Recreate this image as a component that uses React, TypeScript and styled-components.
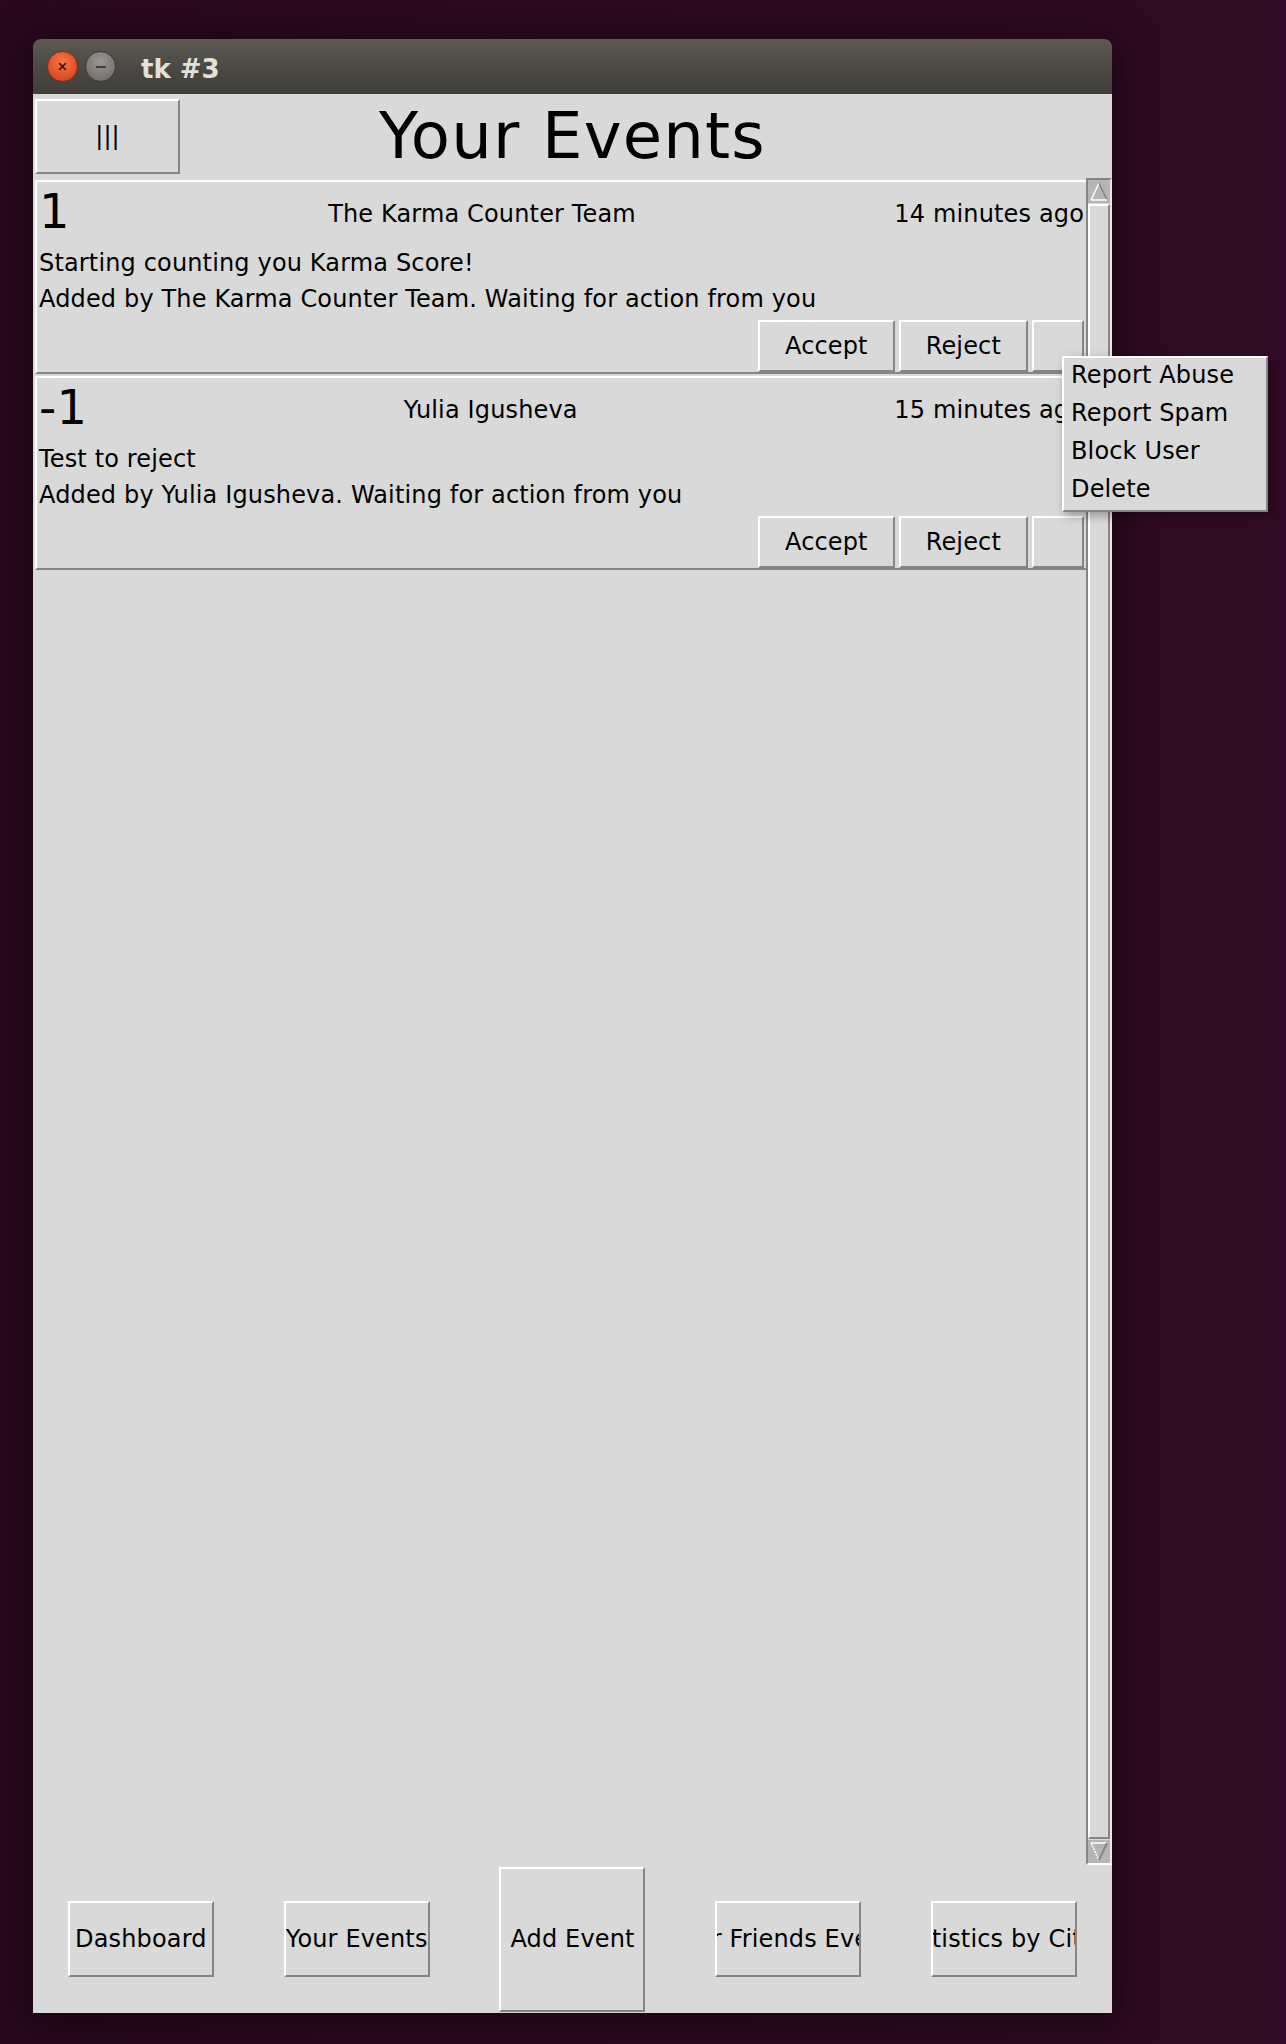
import React from "react";
import styled, { createGlobalStyle, css } from "styled-components";

const GlobalStyle = createGlobalStyle`
  html, body { margin: 0; padding: 0; }
  body {
    background: #2e0a23;
    width: 1286px;
    height: 2044px;
    overflow: hidden;
    font-family: "DejaVu Sans", "Liberation Sans", sans-serif;
    letter-spacing: 0.15px;
  }
`;

const raised = css`
  border-style: solid;
  border-width: 2px;
  border-color: #ffffff #858585 #858585 #ffffff;
`;

const Desktop = styled.div`
  width: 1286px;
  height: 2044px;
  box-sizing: border-box;
  padding: 39px 0 0 33px;
  background: linear-gradient(90deg, #2a0820 0%, #2e0a23 40%, #310b25 100%);
`;

const Window = styled.div`
  position: relative;
  width: 1079px;
  display: flex;
  flex-direction: column;
  border-radius: 8px 8px 0 0;
  box-shadow: 0 6px 40px 10px rgba(0, 0, 0, 0.45);
`;

const TitleBar = styled.div`
  height: 55px;
  display: flex;
  align-items: center;
  gap: 7px;
  padding-left: 14px;
  border-radius: 8px 8px 0 0;
  background: linear-gradient(180deg, #5c5a53 0%, #4a4843 55%, #403f3a 100%);
`;

const WinButton = styled.div<{ $kind: "close" | "min" }>`
  width: 31px;
  height: 31px;
  border-radius: 50%;
  box-sizing: border-box;
  display: flex;
  align-items: center;
  justify-content: center;
  border: 1px solid ${(p) => (p.$kind === "close" ? "#8a2c12" : "#3a3935")};
  background: ${(p) =>
    p.$kind === "close"
      ? "radial-gradient(circle at 50% 35%, #f47a4c 0%, #e5532a 55%, #c8431d 100%)"
      : "radial-gradient(circle at 50% 35%, #9a9893 0%, #7e7c77 55%, #6a6864 100%)"};
`;

const WinTitle = styled.div`
  margin-left: 18px;
  padding-top: 4px;
  font-family: "DejaVu Sans", sans-serif;
  font-weight: bold;
  font-size: 26px;
  letter-spacing: 0;
  color: #e4e0d7;
`;

const Body = styled.div`
  height: 1919px;
  background: #d9d9d9;
  display: flex;
  flex-direction: column;
`;

const Header = styled.div`
  height: 84px;
  display: grid;
  grid-template-columns: 1fr auto 1fr;
  align-items: center;
`;

const MenuButton = styled.div`
  justify-self: start;
  margin-left: 2px;
  width: 145px;
  height: 75px;
  box-sizing: border-box;
  ${raised};
  display: flex;
  align-items: center;
  justify-content: center;
  font-size: 24px;
  color: #000;
`;

const Heading = styled.h1`
  margin: 0;
  font-weight: normal;
  font-size: 64px;
  letter-spacing: 1.2px;
  color: #000;
  font-family: "DejaVu Sans", sans-serif;
`;

const Main = styled.div`
  height: 1687px;
  display: flex;
`;

const List = styled.div`
  flex: 1;
  padding: 2px 0 0 2px;
  display: flex;
  flex-direction: column;
  gap: 2px;
`;

const Card = styled.div`
  border-style: solid;
  border-width: 2px 0 2px 2px;
  border-color: #ffffff #858585 #858585 #ffffff;
  padding: 1px 2px 0 2px;
  color: #000;
`;

const TopRow = styled.div`
  height: 62px;
  display: flex;
  align-items: center;
`;

const Score = styled.div`
  align-self: flex-start;
  font-size: 48px;
  line-height: 56px;
`;

const Author = styled.div`
  flex: 1;
  text-align: center;
  font-size: 24px;
  line-height: 28px;
`;

const Time = styled.div`
  font-size: 24px;
  line-height: 28px;
  white-space: nowrap;
`;

const TextLine = styled.div`
  font-size: 24px;
  line-height: 36px;
  white-space: nowrap;
`;

const Actions = styled.div`
  margin-top: 3px;
  display: flex;
  justify-content: flex-end;
  gap: 4px;
`;

const ActionButton = styled.div<{ $square?: boolean }>`
  height: 52px;
  width: ${(p) => (p.$square ? "52px" : "auto")};
  padding: ${(p) => (p.$square ? "0" : "0 25px")};
  box-sizing: border-box;
  ${raised};
  display: flex;
  align-items: center;
  justify-content: center;
  font-size: 24px;
`;

const Scrollbar = styled.div`
  width: 26px;
  box-sizing: border-box;
  border-style: solid;
  border-width: 2px;
  border-color: #858585 #e8e8e8 #ffffff #858585;
  display: flex;
  flex-direction: column;
`;

const ArrowBox = styled.div`
  height: 23px;
  background: #b5b5b5;
  display: flex;
  align-items: center;
  justify-content: center;
`;

const Slider = styled.div`
  flex: 1;
  margin: 1px 0;
  ${raised};
  background: #d9d9d9;
`;

const BottomBar = styled.div`
  height: 148px;
  display: grid;
  grid-template-columns: repeat(5, 1fr);
  align-items: center;
  justify-items: center;
`;

const NavButton = styled.div<{ $tall?: boolean }>`
  width: 146px;
  height: ${(p) => (p.$tall ? "145px" : "76px")};
  box-sizing: border-box;
  ${raised};
  display: flex;
  align-items: center;
  justify-content: center;
  overflow: hidden;
  white-space: nowrap;
  font-size: 24px;
  color: #000;
`;

const Popup = styled.div`
  position: absolute;
  left: 1029px;
  top: 317px;
  width: 206px;
  box-sizing: border-box;
  ${raised};
  background: #d9d9d9;
  box-shadow: 3px 4px 10px rgba(0, 0, 0, 0.3);
`;

const PopupItem = styled.div`
  height: 38px;
  box-sizing: border-box;
  padding: 0 0 4px 7px;
  line-height: 34px;
  font-size: 24px;
  color: #000;
  white-space: nowrap;
`;

const events = [
  {
    score: "1",
    author: "The Karma Counter Team",
    time: "14 minutes ago",
    text: "Starting counting you Karma Score!",
  },
  {
    score: "-1",
    author: "Yulia Igusheva",
    time: "15 minutes ago",
    text: "Test to reject",
  },
];

const navItems = [
  "Dashboard",
  "Your Events",
  "Add Event",
  "Your Friends Events",
  "Statistics by Cities",
];

const UpArrow = () => (
  <svg width="22" height="23" viewBox="0 0 22 23">
    <polygon points="11,3 3,20 19,20" fill="#b5b5b5" />
    <line x1="11" y1="3" x2="3" y2="20" stroke="#ffffff" strokeWidth="1.5" />
    <line x1="11" y1="3" x2="19" y2="20" stroke="#858585" strokeWidth="1.5" />
    <line x1="3" y1="20" x2="19" y2="20" stroke="#ffffff" strokeWidth="1.5" />
  </svg>
);

const DownArrow = () => (
  <svg width="22" height="23" viewBox="0 0 22 23">
    <line x1="3" y1="3" x2="19" y2="3" stroke="#ffffff" strokeWidth="1.5" />
    <line x1="3" y1="3" x2="11" y2="20" stroke="#ffffff" strokeWidth="1.5" strokeDasharray="2 1" />
    <line x1="19" y1="3" x2="11" y2="20" stroke="#858585" strokeWidth="2" />
  </svg>
);

export default function App() {
  return (
    <>
      <GlobalStyle />
      <Desktop>
        <Window>
          <TitleBar>
            <WinButton $kind="close">
              <svg width="11" height="11" viewBox="0 0 10 10">
                <path d="M2 2 L8 8 M8 2 L2 8" stroke="#4a1a0c" strokeWidth="1.6" />
              </svg>
            </WinButton>
            <WinButton $kind="min">
              <svg width="12" height="4" viewBox="0 0 12 4">
                <path d="M1 2 L11 2" stroke="#3a3935" strokeWidth="1.8" />
              </svg>
            </WinButton>
            <WinTitle>tk #3</WinTitle>
          </TitleBar>
          <Body>
            <Header>
              <MenuButton>|||</MenuButton>
              <Heading>Your Events</Heading>
              <div />
            </Header>
            <Main>
              <List>
                {events.map((e) => (
                  <Card key={e.author}>
                    <TopRow>
                      <Score>{e.score}</Score>
                      <Author>{e.author}</Author>
                      <Time>{e.time}</Time>
                    </TopRow>
                    <TextLine>{e.text}</TextLine>
                    <TextLine>Added by {e.author}. Waiting for action from you</TextLine>
                    <Actions>
                      <ActionButton>Accept</ActionButton>
                      <ActionButton>Reject</ActionButton>
                      <ActionButton $square />
                    </Actions>
                  </Card>
                ))}
              </List>
              <Scrollbar>
                <ArrowBox>
                  <UpArrow />
                </ArrowBox>
                <Slider />
                <ArrowBox>
                  <DownArrow />
                </ArrowBox>
              </Scrollbar>
            </Main>
            <BottomBar>
              {navItems.map((n) => (
                <NavButton key={n} $tall={n === "Add Event"}>
                  {n}
                </NavButton>
              ))}
            </BottomBar>
          </Body>
          <Popup>
            <PopupItem>Report Abuse</PopupItem>
            <PopupItem>Report Spam</PopupItem>
            <PopupItem>Block User</PopupItem>
            <PopupItem>Delete</PopupItem>
          </Popup>
        </Window>
      </Desktop>
    </>
  );
}
